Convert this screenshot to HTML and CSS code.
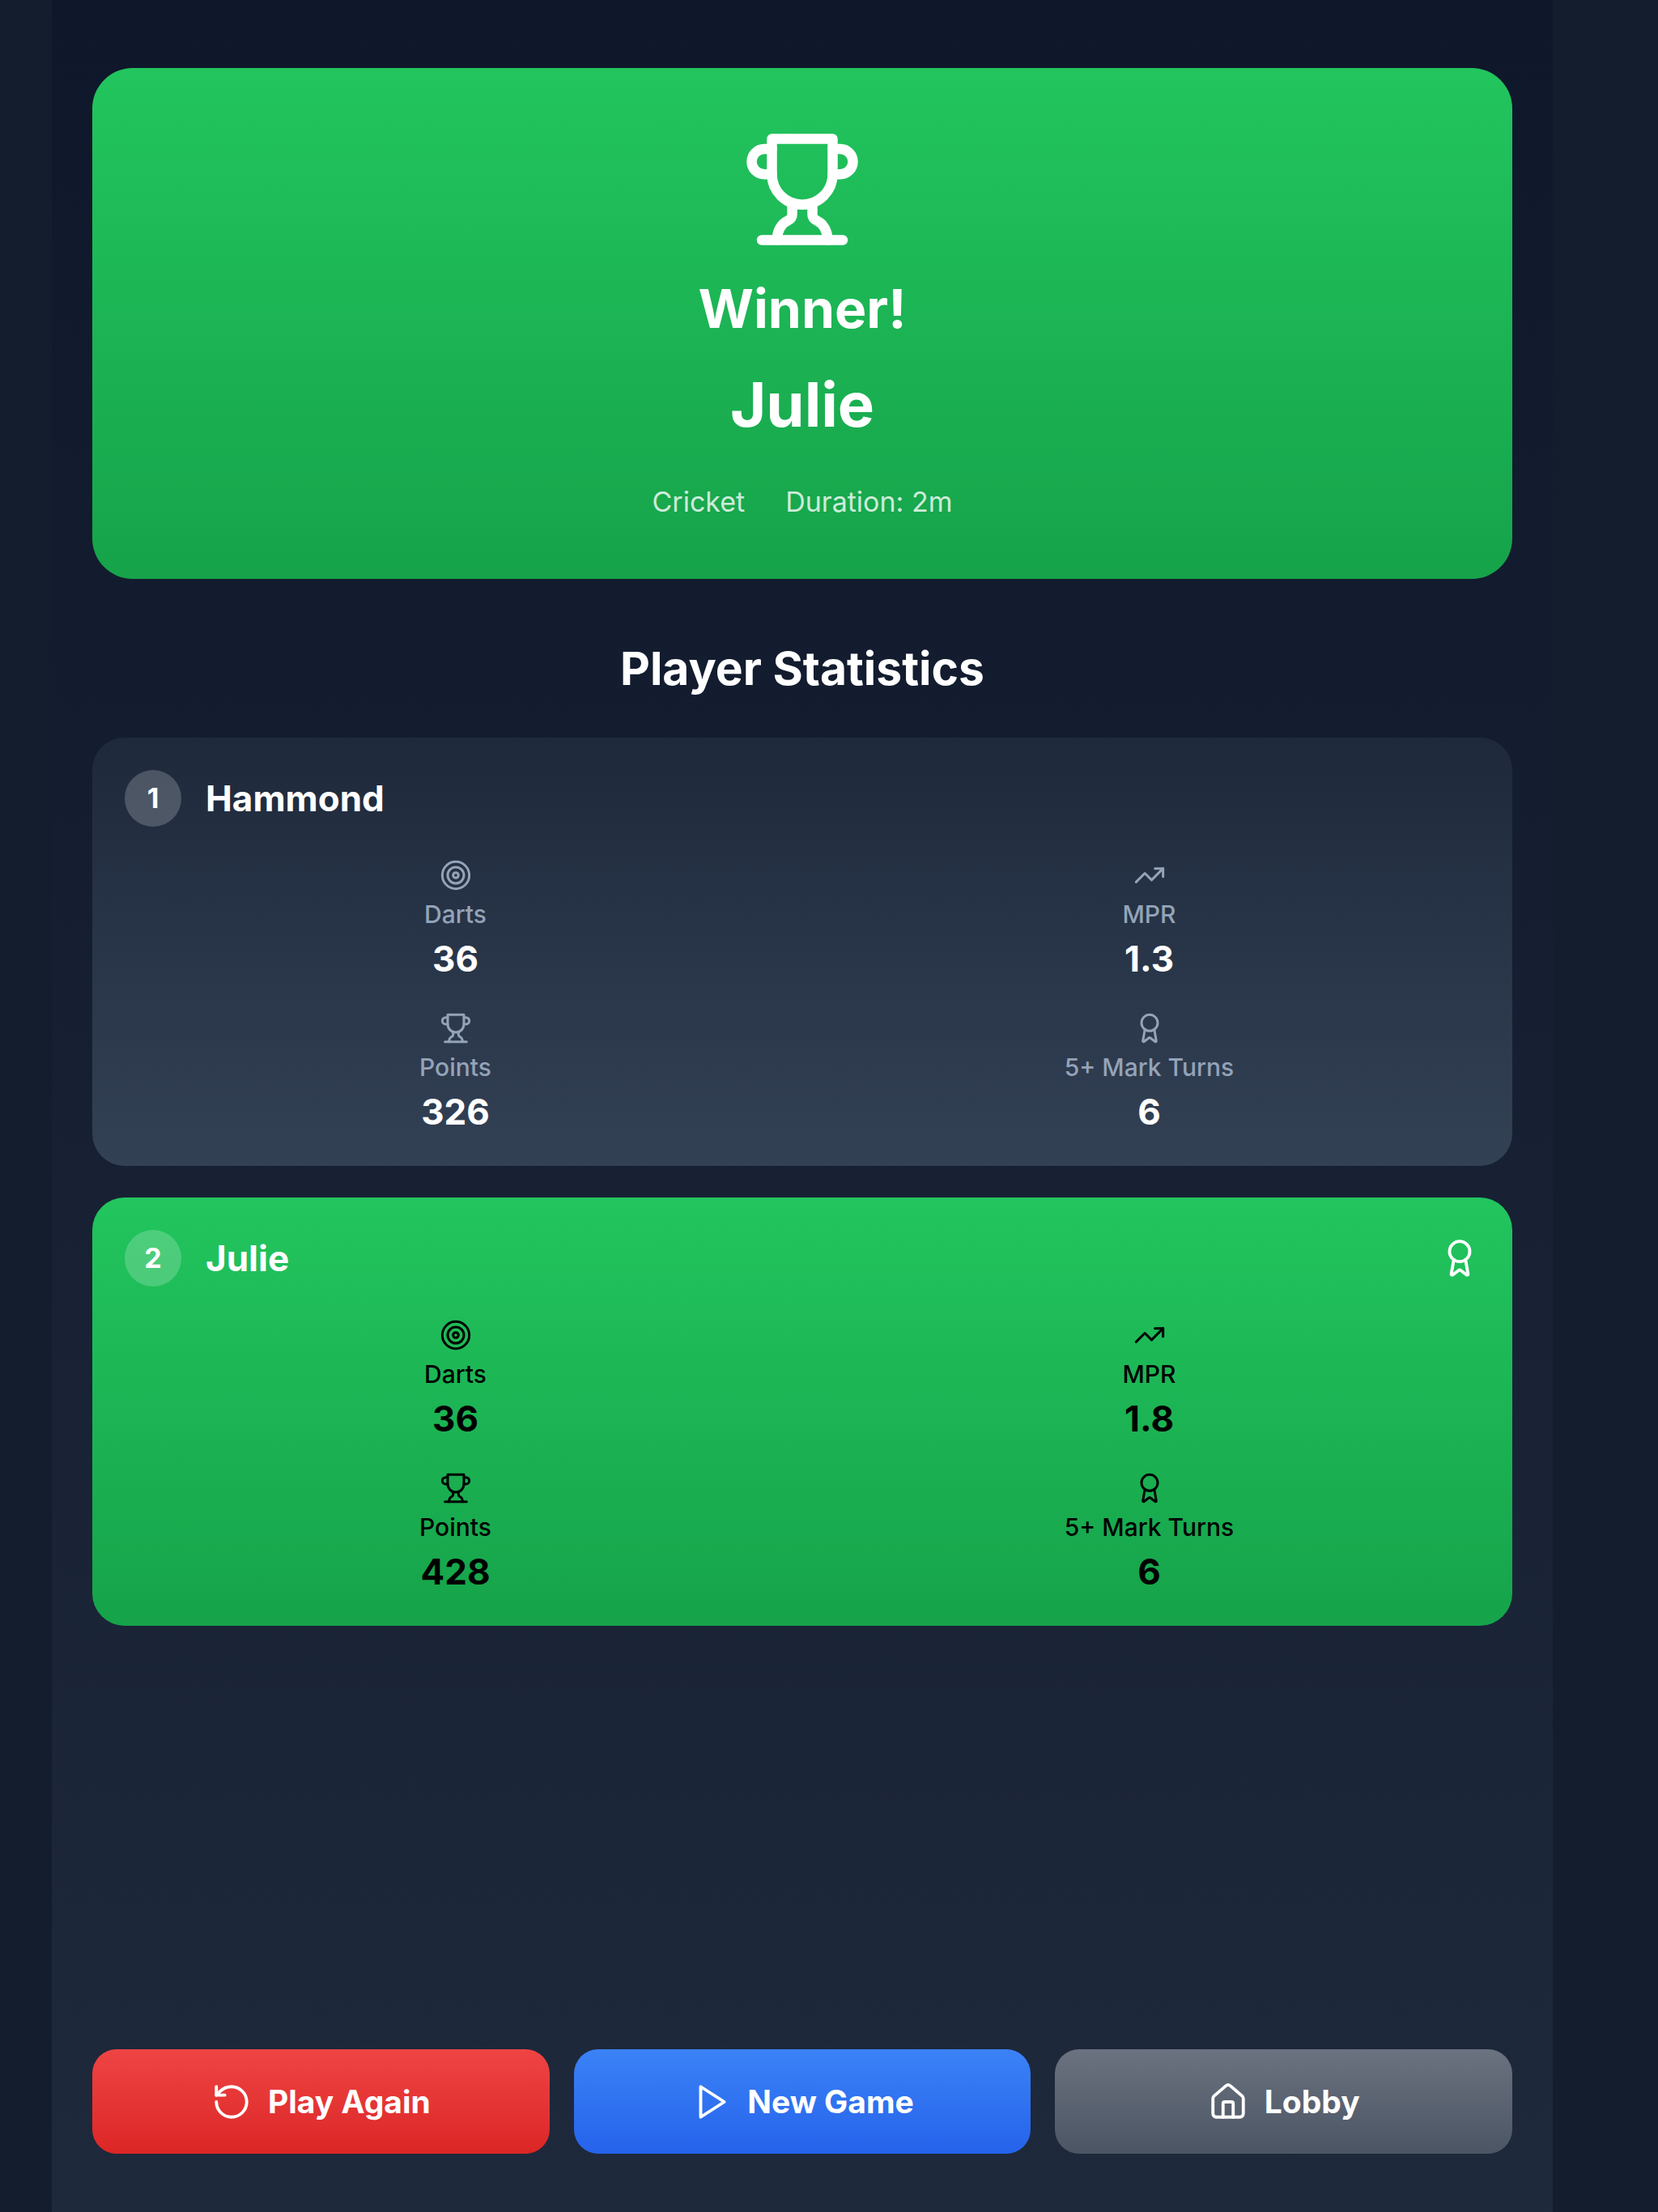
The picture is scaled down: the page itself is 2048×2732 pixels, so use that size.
FILE: index.html
```html
<!DOCTYPE html>
<html lang="en">
<head>
<meta charset="utf-8">
<meta name="viewport" content="width=device-width, initial-scale=1">
<title>Game Results</title>
<link rel="stylesheet" href="styles.css">
</head>
<body>
<svg class="sprite" aria-hidden="true">
  <symbol id="trophy" viewBox="0 0 24 24"><path d="M6 9H4.5a2.5 2.5 0 0 1 0-5H6"/><path d="M18 9h1.5a2.5 2.5 0 0 0 0-5H18"/><path d="M4 22h16"/><path d="M10 14.66V17c0 .55-.47.98-.97 1.21C7.85 18.75 7 20.24 7 22"/><path d="M14 14.66V17c0 .55.47.98.97 1.21C16.15 18.75 17 20.24 17 22"/><path d="M18 2H6v7a6 6 0 0 0 12 0V2Z"/></symbol>
  <symbol id="target" viewBox="0 0 24 24"><circle cx="12" cy="12" r="10"/><circle cx="12" cy="12" r="6"/><circle cx="12" cy="12" r="2"/></symbol>
  <symbol id="trend" viewBox="0 0 24 24"><path d="M22 7 13.5 15.5 8.5 10.5 2 17"/><path d="M16 7h6v6"/></symbol>
  <symbol id="award" viewBox="0 0 24 24"><path d="m15.477 12.89 1.515 8.526a.5.5 0 0 1-.81.47l-3.58-2.687a1 1 0 0 0-1.197 0l-3.586 2.686a.5.5 0 0 1-.81-.469l1.514-8.526"/><circle cx="12" cy="8" r="6"/></symbol>
  <symbol id="rotate" viewBox="0 0 24 24"><path d="M3 12a9 9 0 1 0 9-9 9.75 9.75 0 0 0-6.74 2.74L3 8"/><path d="M3 3v5h5"/></symbol>
  <symbol id="play" viewBox="0 0 24 24"><path d="m6 3 14 9-14 9V3z"/></symbol>
  <symbol id="house" viewBox="0 0 24 24"><path d="M15 21v-8a1 1 0 0 0-1-1h-4a1 1 0 0 0-1 1v8"/><path d="M3 10a2 2 0 0 1 .709-1.528l7-5.999a2 2 0 0 1 2.582 0l7 5.999A2 2 0 0 1 21 10v9a2 2 0 0 1-2 2H5a2 2 0 0 1-2-2z"/></symbol>
</svg>
<main class="screen">
  <section class="winner">
    <svg class="icon icon-hero"><use href="#trophy"/></svg>
    <h1 class="winner-title">Winner!</h1>
    <p class="winner-name">Julie</p>
    <div class="winner-meta"><span>Cricket</span><span>Duration: 2m</span></div>
  </section>

  <section class="stats">
    <h2 class="stats-title">Player Statistics</h2>
    <article class="player">
      <header class="player-head">
        <span class="rank">1</span>
        <h3 class="player-name">Hammond</h3>
      </header>
      <dl class="stat-grid">
        <div class="stat"><svg class="icon icon-small"><use href="#target"/></svg><dt>Darts</dt><dd>36</dd></div>
        <div class="stat"><svg class="icon icon-small"><use href="#trend"/></svg><dt>MPR</dt><dd>1.3</dd></div>
        <div class="stat"><svg class="icon icon-small"><use href="#trophy"/></svg><dt>Points</dt><dd>326</dd></div>
        <div class="stat"><svg class="icon icon-small"><use href="#award"/></svg><dt>5+ Mark Turns</dt><dd>6</dd></div>
      </dl>
    </article>
    <article class="player player-won">
      <header class="player-head">
        <span class="rank">2</span>
        <h3 class="player-name">Julie</h3>
        <svg class="icon"><use href="#award"/></svg>
      </header>
      <dl class="stat-grid">
        <div class="stat"><svg class="icon icon-small"><use href="#target"/></svg><dt>Darts</dt><dd>36</dd></div>
        <div class="stat"><svg class="icon icon-small"><use href="#trend"/></svg><dt>MPR</dt><dd>1.8</dd></div>
        <div class="stat"><svg class="icon icon-small"><use href="#trophy"/></svg><dt>Points</dt><dd>428</dd></div>
        <div class="stat"><svg class="icon icon-small"><use href="#award"/></svg><dt>5+ Mark Turns</dt><dd>6</dd></div>
      </dl>
    </article>
  </section>

  <nav class="actions">
    <button type="button" class="action action-again"><svg class="icon"><use href="#rotate"/></svg>Play Again</button>
    <button type="button" class="action action-new"><svg class="icon"><use href="#play"/></svg>New Game</button>
    <button type="button" class="action action-lobby"><svg class="icon"><use href="#house"/></svg>Lobby</button>
  </nav>
</main>
</body>
</html>
```
FILE: styles.css
```css
* {
  box-sizing: border-box;
  margin: 0;
}

body {
  padding: 0 130px 0 64px;
  background: #141d2e;
  color: #fff;
  font-family: Inter, "Liberation Sans", sans-serif;
}

.sprite {
  position: absolute;
  width: 0;
  height: 0;
}

.icon {
  flex: none;
  width: 50px;
  height: 50px;
  fill: none;
  stroke: currentColor;
  stroke-width: 1.85;
  stroke-linecap: round;
  stroke-linejoin: round;
}

.icon-small {
  width: 40px;
  height: 40px;
  stroke-width: 1.8;
}

.icon-hero {
  width: 150px;
  height: 150px;
  stroke-width: 2;
}

.screen {
  display: flex;
  flex-direction: column;
  min-height: 100vh;
  padding: 84px 50px 72px;
  background: linear-gradient(#0f172a, #1e293b);
}

.winner {
  display: flex;
  flex-direction: column;
  align-items: center;
  gap: 32px;
  padding: 75px 40px;
  border-radius: 50px;
  background: linear-gradient(#22c55e, #16a34a);
}

.winner-title {
  font-size: 66px;
  font-weight: 700;
  line-height: 80px;
}

.winner-name {
  font-size: 76px;
  font-weight: 700;
  line-height: 92px;
}

.winner-meta {
  display: flex;
  gap: 50px;
  margin-top: 23px;
  color: rgba(255, 255, 255, 0.8);
  font-size: 34px;
  line-height: 40px;
}

.stats {
  display: flex;
  flex-direction: column;
  gap: 39px;
  margin: 76px 0 40px;
}

.stats-title {
  margin-bottom: 11px;
  font-size: 57px;
  font-weight: 700;
  line-height: 70px;
  text-align: center;
}

.player {
  padding: 40px;
  border-radius: 40px;
  background: linear-gradient(#1e293b, #334155);
}

.player-head {
  display: flex;
  align-items: center;
  gap: 30px;
  margin-bottom: 40px;
}

.rank {
  width: 70px;
  border-radius: 50%;
  background: rgba(255, 255, 255, 0.2);
  font-size: 34px;
  font-weight: 700;
  line-height: 70px;
  text-align: center;
}

.player-name {
  flex: 1;
  font-size: 44px;
  font-weight: 700;
  line-height: 54px;
}

.stat-grid {
  display: grid;
  grid-template-columns: 1fr 1fr;
  gap: 39px 40px;
}

.stat {
  display: flex;
  flex-direction: column;
  align-items: center;
  gap: 11px;
  color: #94a3b8;
}

.stat dt {
  font-size: 30px;
  font-weight: 500;
  line-height: 34px;
}

.stat dd {
  color: #fff;
  font-size: 44px;
  font-weight: 700;
  line-height: 54px;
}

.player-won {
  background: linear-gradient(#22c55e, #16a34a);
}

.player-won .stat,
.player-won dd {
  color: #000;
}

.actions {
  display: grid;
  grid-template-columns: repeat(3, 1fr);
  gap: 30px;
  margin-top: auto;
}

.action {
  display: flex;
  align-items: center;
  justify-content: center;
  gap: 20px;
  min-height: 129px;
  border: 0;
  border-radius: 30px;
  color: inherit;
  font: 700 39px/48px Inter, "Liberation Sans", sans-serif;
}

.action-again {
  background: linear-gradient(#ef4444, #dc2626);
}

.action-new {
  background: linear-gradient(#3b82f6, #2563eb);
}

.action-lobby {
  background: linear-gradient(#6b7280, #4b5563);
}
```
